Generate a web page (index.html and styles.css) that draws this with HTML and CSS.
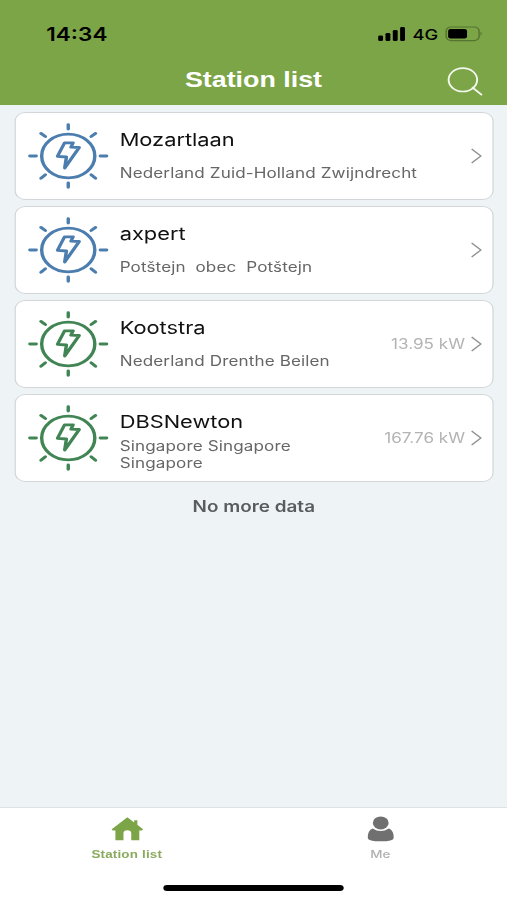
FILE: index.html
```html
<!DOCTYPE html>
<html lang="en">
<head>
<meta charset="utf-8">
<title>Station list</title>
<link rel="stylesheet" href="styles.css">
</head>
<body>
<svg class="defs" aria-hidden="true">
  <symbol id="sun" viewBox="-34 -34 68 68">
    <g fill="none" stroke="currentColor" stroke-width="2.8" stroke-linecap="round" stroke-linejoin="round">
      <circle r="21.8"/>
      <path d="M-3-13.2H4L2.200-8.800L9-8.500L-2.900 12L-1.500 1L-8.800.3Z"/>
      <path d="M0-31.3v4.4M0 26.9v4.4M-31.5 0h5.2M26.3 0h5.2M-22.4-22.6l3.6 3.1M22.4-22.6l-3.6 3.1M-22.4 22.2l3.6-3.4M22.4 22.2l-3.6-3.4"/>
    </g>
  </symbol>
  <symbol id="chevron" viewBox="0 0 10 18">
    <path d="M1 2L8.600 9L1 16" fill="none" stroke="currentColor" stroke-width="1.2"/>
  </symbol>
</svg>
<div class="phone">
  <header class="header">
    <div class="status">
      <span class="clock">14:34</span>
      <div class="indicators">
        <svg class="signal" viewBox="0 0 22 15"><rect x=".3" y="8.500" width="4" height="5.500" rx="1.300"/><rect x="6.300" y="6" width="4" height="8" rx="1.300"/><rect x="12.300" y="3" width="4" height="11" rx="1.300"/><rect x="18.300" y="0" width="4" height="14" rx="1.300"/></svg>
        <span class="network">4G</span>
        <svg class="battery" viewBox="0 0 30 16"><rect x=".1" y="1" width="27" height="13.600" rx="4" fill="none" stroke="#55742f" stroke-width="1.200"/><rect x="1.700" y="3" width="15.500" height="9.400" rx="2"/><path d="M28.300 5.500q2 2.200 0 4.500z" fill="#55742f"/></svg>
      </div>
    </div>
    <div class="titlebar">
      <h1 class="title">Station list</h1>
      <svg class="search" viewBox="0 0 30 30"><circle cx="12.800" cy="12.800" r="11.700"/><path d="M20.800 20.600L28 27.600"/></svg>
    </div>
  </header>
  <main class="list">
    <article class="card">
      <svg class="sun blue"><use href="#sun"/></svg>
      <div class="info"><h2 class="name">Mozartlaan</h2><p class="place">Nederland Zuid-Holland Zwijndrecht</p></div>
      <svg class="chevron"><use href="#chevron"/></svg>
    </article>
    <article class="card">
      <svg class="sun blue"><use href="#sun"/></svg>
      <div class="info"><h2 class="name">axpert</h2><p class="place">Potštejn&nbsp; obec&nbsp; Potštejn</p></div>
      <svg class="chevron"><use href="#chevron"/></svg>
    </article>
    <article class="card">
      <svg class="sun green"><use href="#sun"/></svg>
      <div class="info"><h2 class="name">Kootstra</h2><p class="place">Nederland Drenthe Beilen</p></div>
      <span class="power">13.95 kW</span>
      <svg class="chevron"><use href="#chevron"/></svg>
    </article>
    <article class="card">
      <svg class="sun green"><use href="#sun"/></svg>
      <div class="info tight"><h2 class="name">DBSNewton</h2><p class="place">Singapore Singapore<br>Singapore</p></div>
      <span class="power">167.76 kW</span>
      <svg class="chevron"><use href="#chevron"/></svg>
    </article>
    <p class="end">No more data</p>
  </main>
  <footer class="footer">
    <nav class="tabs">
      <div class="tab active">
        <svg class="icon" viewBox="0 0 26 26"><path d="M13.500 1.300L19.100 6.400V4.300H21.700V8.800L26.300 13.200Q26.500 14.800 23.300 14.600V24.300H16.700V17.500Q16.700 14.300 13.500 14.300T10.300 17.500V24.300H3.700V14.600Q.5 14.800 .7 13.200Z"/></svg>
        <span class="label">Station list</span>
      </div>
      <div class="tab">
        <svg class="icon" viewBox="0 0 26 26"><ellipse cx="13.400" cy="6.900" rx="6.500" ry="6.500"/><path d="M6.700 12.600Q13.400 17.600 20.100 12.600Q24.200 14.500 24 22.200Q23.900 25.300 13.400 25.300T2.800 22.200Q2.600 14.500 6.700 12.600Z"/></svg>
        <span class="label">Me</span>
      </div>
    </nav>
    <div class="home"></div>
  </footer>
</div>
</body>
</html>
```
FILE: styles.css
```css
* { box-sizing: border-box; margin: 0; padding: 0; }
html, body { width: 507px; height: 900px; overflow: hidden; background: #eef3f6; }
.defs { display: block; width: 0; height: 0; }
svg { display: block; flex: none; overflow: visible; }

/* The interface is laid out on a 416px column and stretched to the window width. */
.phone {
  display: flex;
  flex-direction: column;
  width: 416px;
  height: 900px;
  transform: scaleX(1.21875);
  transform-origin: 0 0;
  font-family: Inter, "Liberation Sans", sans-serif;
}

.header { height: 105px; background: #7ba547; }
.status { display: flex; justify-content: space-between; height: 56px; padding: 12px 20.500px 0 38px; }
.clock { font-size: 18.500px; line-height: 44px; font-weight: 600; }
.indicators { display: flex; align-items: center; height: 44px; }
.signal { width: 22px; height: 15px; }
.network { margin: 0 6px 0 6.500px; font-size: 15px; font-weight: 500; }
.battery { width: 30px; height: 16px; }
.titlebar { display: flex; align-items: center; height: 49px; padding: 0 19.500px 0 49.500px; }
.title { flex: 1; text-align: center; color: #fff; font: bold 22px/48px "Liberation Sans", sans-serif; margin-top: -2px; }
.search { width: 30px; height: 30px; margin-top: 2px; fill: none; stroke: #f4f8ee; stroke-width: 1.600; stroke-linecap: round; }

.list { flex: 1; padding: 6.500px 11px 0 11.500px; }
.card {
  display: flex;
  align-items: center;
  height: 88px;
  margin-bottom: 6px;
  padding: 0 8.500px 0 9.500px;
  background: #fff;
  border: 1px solid #d3d6d9;
  border-radius: 9px;
}
.sun { width: 68px; height: 68px; }
.blue { color: #4c7daf; }
.green { color: #418554; }
.info { flex: 1; align-self: stretch; padding: 15.500px 0 0 8.200px; white-space: nowrap; }
.name { font-size: 17.900px; line-height: 24px; font-weight: 400; color: #111; }
.place { margin-top: 11px; font-size: 14px; line-height: 20px; letter-spacing: .1px; color: #666; }
.tight .place { margin-top: 3px; line-height: 17px; }
.power { margin-right: 4px; font-size: 14px; color: #b3b3b3; }
.chevron { width: 10px; height: 18px; color: #919191; }
.end { padding-top: 7px; text-align: center; font-size: 15.500px; line-height: 24px; font-weight: 600; color: #595c5e; }

.footer { height: 93px; background: #fff; border-top: 1px solid #dfe2e5; }
.tabs { display: flex; height: 77px; }
.tab { flex: 1; display: flex; flex-direction: column; align-items: center; padding-top: 8px; color: #b0b0b0; }
.tab .icon { width: 26px; height: 26px; fill: #707070; }
.tab .label { margin-top: 4px; font: 500 11px/16px Inter, sans-serif; }
.tab.active { color: #8aaa5e; }
.tab.active .icon { fill: #7ba547; }
.tab.active .label { font: bold 11px/16px "Liberation Sans", sans-serif; letter-spacing: .15px; }
.home { width: 148px; height: 6px; margin: 0 auto; border-radius: 3px; background: #000; }
```
